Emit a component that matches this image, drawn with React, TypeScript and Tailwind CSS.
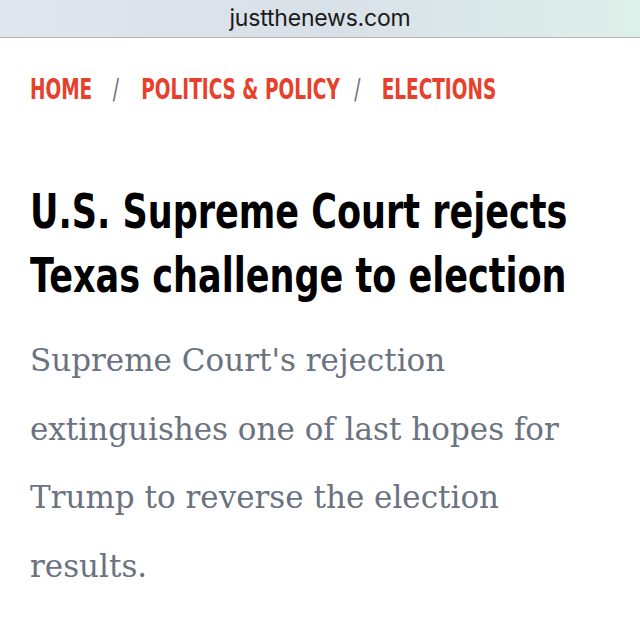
const condensed = "font-['DejaVu_Sans',sans-serif] font-bold origin-left whitespace-nowrap"

export default function App() {
  return (
    <div className="min-h-screen bg-white">
      <div className="h-[38px] flex items-center justify-center border-b border-[#b4b4b4] bg-gradient-to-r from-[#e2e6ee] via-[#d8e0e8] to-[#def0ea]">
        <span className="text-[23px] leading-none text-[#1a1a1a] font-['Inter',sans-serif] tracking-[-0.2px]">justthenews.com</span>
      </div>

      <div className="px-[30px]">
        <nav className={`mt-[36px] flex items-center text-[28px] leading-[32px] text-[#e8402b] scale-x-[0.66] ${condensed}`}>
          <span>HOME</span>
          <span className="text-[#6b7280] font-normal ml-[31px] mr-[34px]">/</span>
          <span>POLITICS &amp; POLICY</span>
          <span className="text-[#6b7280] font-normal ml-[22px] mr-[32px]">/</span>
          <span>ELECTIONS</span>
        </nav>

        <h1 className="mt-[73px] text-[48px] leading-[64px] text-black">
          <div className={`scale-x-[0.73] ${condensed}`}>U.S. Supreme Court rejects</div>
          <div className={`scale-x-[0.73] ${condensed}`}>Texas challenge to election</div>
        </h1>

        <p className="mt-[19px] text-[31px] leading-[68.5px] text-[#6b7280] font-['DejaVu_Serif',serif]">
          Supreme Court's rejection extinguishes one of last hopes for Trump to reverse the election results.
        </p>
      </div>
    </div>
  )
}
